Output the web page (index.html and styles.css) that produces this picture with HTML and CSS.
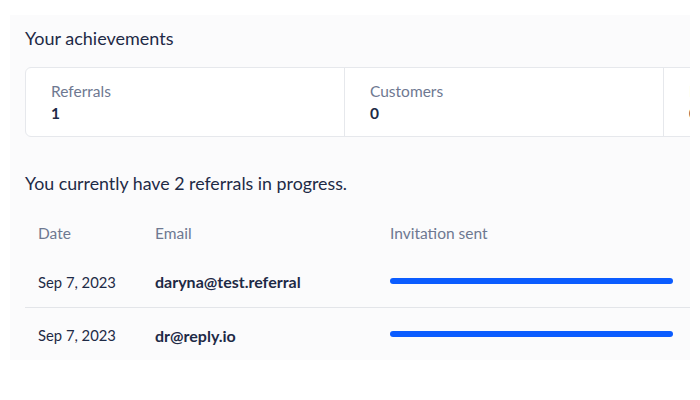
FILE: index.html
```html
<!DOCTYPE html>
<html>
<head>
<meta charset="utf-8">
<link rel="stylesheet" href="styles.css">
</head>
<body>
<div class="panel">
  <h2 class="title">Your achievements</h2>
  <div class="stats">
    <div class="stat"><div class="stat-label">Referrals</div><div class="stat-value">1</div></div>
    <div class="stat"><div class="stat-label">Customers</div><div class="stat-value">0</div></div>
    <div class="stat"><div class="stat-label">Rewards</div><div class="stat-value">0</div></div>
  </div>
  <p class="progress-note">You currently have 2 referrals in progress.</p>
  <div class="table">
    <div class="row head">
      <div class="c-date">Date</div>
      <div class="c-email">Email</div>
      <div class="c-inv">Invitation sent</div>
    </div>
    <div class="row item">
      <div class="c-date date-val">Sep 7, 2023</div>
      <div class="c-email strong">daryna@test.referral</div>
      <div class="c-inv"><div class="bar"></div></div>
    </div>
    <div class="row item last">
      <div class="c-date date-val">Sep 7, 2023</div>
      <div class="c-email strong">dr@reply.io</div>
      <div class="c-inv"><div class="bar"></div></div>
    </div>
  </div>
</div>
</body>
</html>
```
FILE: styles.css
```css
html, body {
  margin: 0;
  padding: 0;
  background: #ffffff;
}
body {
  font-family: Lato, "Open Sans", sans-serif;
  color: #1e2a46;
  width: 700px;
  height: 400px;
  overflow: hidden;
}
.panel {
  margin: 15px 10px 0 10px;
  width: 680px;
  height: 345px;
  background: #fbfbfc;
  overflow: hidden;
  padding: 0 0 0 15px;
  box-sizing: border-box;
}
.title {
  margin: 0;
  padding-top: 11px;
  font-size: 18px;
  font-weight: 400;
  line-height: 24px;
  height: 41px;
}
.stats {
  display: flex;
  width: 960px;
  height: 70px;
  box-sizing: border-box;
  border: 1px solid #e6e8ec;
  border-radius: 6px;
  background: #ffffff;
}
.stat {
  flex: 0 0 319px;
  box-sizing: border-box;
  padding: 12px 0 0 25px;
  border-right: 1px solid #e6e8ec;
}
.stat-label {
  font-size: 15.5px;
  color: #6e7891;
  line-height: 22px;
}
.stat-value {
  font-size: 15.5px;
  font-weight: 700;
  line-height: 22px;
}
.progress-note {
  margin: 0;
  padding-top: 34px;
  font-size: 17.8px;
  line-height: 24px;
  height: 38px;
}
.table {
  width: 665px;
}
.row {
  display: flex;
  align-items: center;
  font-size: 15.5px;
}
.row.head {
  height: 47px;
  color: #6e7891;
}
.row.item {
  height: 51px;
  border-bottom: 1px solid #e3e5e9;
}
.row.item.last {
  border-bottom: none;
  height: 54px;
}
.c-date {
  width: 130px;
  padding-left: 13px;
  box-sizing: border-box;
}
.date-val {
  font-size: 14.8px;
}
.c-email {
  width: 235px;
}
.strong {
  font-weight: 700;
  font-size: 16px;
}
.c-inv {
  flex: 1;
  padding-right: 17px;
}
.bar {
  height: 6px;
  border-radius: 3px;
  background: #0b5cff;
  margin-top: -2px;
}
```
